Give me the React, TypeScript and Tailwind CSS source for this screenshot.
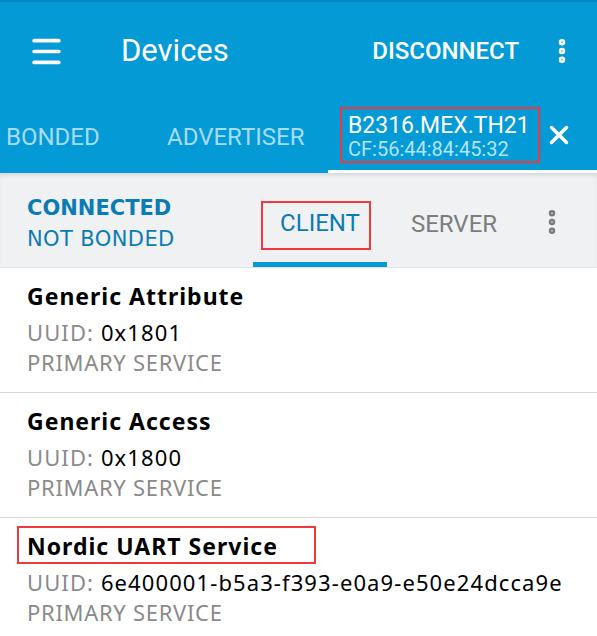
import { EllipsisVertical, Menu, X } from 'lucide-react'

interface Service {
  name: string
  uuid: string
  marked?: boolean
}

const services: Service[] = [
  { name: 'Generic Attribute', uuid: '0x1801' },
  { name: 'Generic Access', uuid: '0x1800' },
  { name: 'Nordic UART Service', uuid: '6e400001-b5a3-f393-e0a9-e50e24dcca9e', marked: true },
]

function ServiceRow({ service }: { service: Service }) {
  return (
    <div className="h-[125px] border-b border-[#d6d6d6] pl-[27px] pt-[8px]">
      <div
        className={
          service.marked
            ? '-ml-[10px] w-[299px] h-[38px] border-2 border-[#f0393c] pl-[8px]'
            : '-ml-[2px] h-[38px] border-2 border-transparent'
        }
      >
        <div className="pt-[2px] text-[23px] leading-[32px] font-bold tracking-[1px] text-black">{service.name}</div>
      </div>
      <div className="mt-[3px] text-[22px] leading-[30px] tracking-[1.1px]">
        <span className="text-[#8a8a8a]">UUID: </span>
        <span className="text-black">{service.uuid}</span>
      </div>
      <div className="text-[22px] leading-[30px] tracking-[0.7px] text-[#8a8a8a]">PRIMARY SERVICE</div>
    </div>
  )
}

export default function App() {
  return (
    <div className="w-[597px] h-[636px] overflow-hidden bg-white font-['Noto_Sans',sans-serif]">
      {/* app bar */}
      <div className="bg-[#039ad6] border-t-2 border-[#0287c1] font-['Roboto',sans-serif]">
        <div className="h-[98px] flex items-center">
          <div className="w-[121px] pl-[28px]">
            <Menu size={37} strokeWidth={2.4} className="text-white" />
          </div>
          <div className="flex-1 text-[31px] text-white">Devices</div>
          <div className="text-[24px] font-medium text-white pr-[28px]">DISCONNECT</div>
          <div className="pr-[20px]">
            <EllipsisVertical size={30} strokeWidth={3.2} className="text-white" />
          </div>
        </div>

        {/* device tabs */}
        <div className="h-[73px] flex items-stretch">
          <div className="w-[136px] flex items-center pl-[6px] text-[24px] text-[#a6dcf4]">BONDED</div>
          <div className="w-[192px] flex items-center pl-[31px] text-[24px] text-[#a6dcf4]">ADVERTISER</div>
          <div className="flex-1 flex items-center border-b-[3px] border-white pl-[12px]">
            <div className="w-[200px] h-[56px] border-2 border-[#f0393c] pl-[6px] pt-[5px]">
              <div className="text-[23px] leading-[24px] text-white">B2316.MEX.TH21</div>
              <div className="text-[20px] leading-[22px] text-[#b5e4f8]">CF:56:44:84:45:32</div>
            </div>
            <X size={30} strokeWidth={2.8} className="ml-[4px] text-white" />
          </div>
        </div>
      </div>

      {/* connection bar */}
      <div className="h-[95px] bg-[#eff1f3] flex items-stretch shadow-[inset_0_4px_4px_-2px_rgba(0,0,0,0.12)] border-b border-[#e2e4e6]">
        <div className="w-[253px] pl-[27px] pt-[20px] font-['DejaVu_Sans',sans-serif] text-[#0b7cb3]">
          <div className="text-[21px] leading-[30px] font-bold">CONNECTED</div>
          <div className="text-[21px] leading-[32px] tracking-[0.4px]">NOT BONDED</div>
        </div>
        <div className="w-[134px] border-b-[5px] border-[#039ad6] pt-[28px] pl-[8px]">
          <div className="w-[110px] h-[49px] border-2 border-[#f0393c] flex items-center justify-center pl-[8px] pb-[6px] font-['Roboto',sans-serif] text-[24px] text-[#0b7cb3]">
            CLIENT
          </div>
        </div>
        <div className="w-[134px] flex items-center justify-center pt-[8px] font-['Roboto',sans-serif] text-[24px] text-[#7d7d7d]">
          SERVER
        </div>
        <div className="flex-1 flex items-center pl-[16px] pt-[3px]">
          <EllipsisVertical size={30} strokeWidth={3.2} className="text-[#7d7d7d]" />
        </div>
      </div>

      {services.map((s) => (
        <ServiceRow key={s.name} service={s} />
      ))}
    </div>
  )
}
